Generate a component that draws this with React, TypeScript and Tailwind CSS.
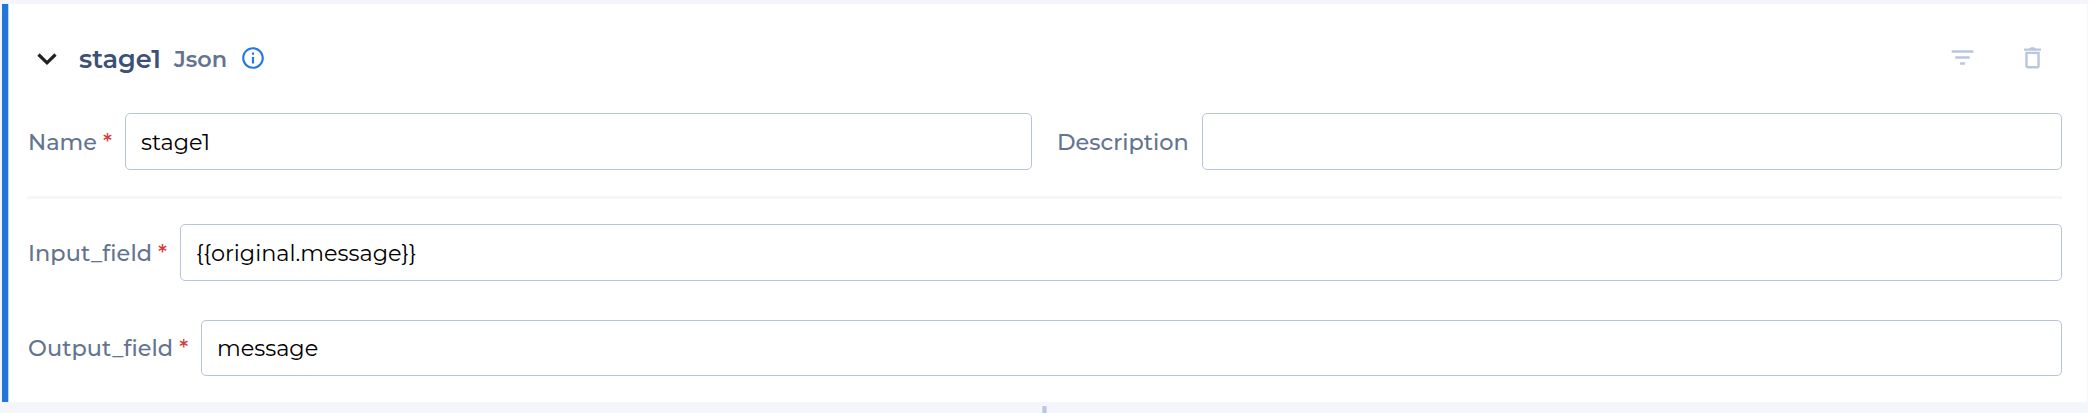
import type { ReactNode } from "react";

function Label({ children, star, className }: { children: ReactNode; star?: boolean; className: string }) {
  return (
    <span className={"flex h-full shrink-0 items-center text-[22.4px] font-medium whitespace-pre text-[#64748f] " + className}>
      <span>{children}</span>
      {star && <span className="ml-[6px] text-[#d03a3a]">*</span>}
    </span>
  );
}

function Field({ value, className, label }: { value: string; className: string; label: string }) {
  return (
    <input
      aria-label={label}
      defaultValue={value}
      className={"shrink-0 rounded-[5px] border border-[#b8c3dc] bg-white px-[15px] text-[22.4px] text-black outline-none " + className}
    />
  );
}

export default function App() {
  return (
    <main className="flex h-[413px] w-[2088px] flex-col overflow-hidden bg-[#f5f6fb] pt-1 pl-[2px] font-['Montserrat','Inter',sans-serif]">
      <section className="flex h-[398px] w-[2085px] shrink-0 flex-col border-l-[6px] border-[#2176db] bg-white pr-[25px]">
        <div className="flex min-h-0 flex-1 flex-col border-l border-[#bdd5f3] pl-[18px]">
          <header className="flex h-[109px] shrink-0 items-center">
            <svg className="ml-[9px] h-[14px] w-[22px]" viewBox="0 0 22 14" fill="none" stroke="#222" strokeWidth="3.2">
              <path d="M2.500 2.500 11 10.800 19.500 2.500" />
            </svg>
            <h2 className="mt-px ml-[21px] w-[95px] text-[25.6px] font-semibold whitespace-nowrap text-[#3c5078]">stage1</h2>
            <span className="mt-[3px] w-[63px] text-[22.4px] font-semibold whitespace-nowrap text-[#64748f]">Json</span>
            <svg className="mb-[2px] ml-[3px] h-[26px] w-[26px]" viewBox="0 0 24 24" fill="#2176e8">
              <path d="M11 7h2v2h-2zm0 4h2v6h-2zm1-9C6.480 2 2 6.480 2 12s4.480 10 10 10 10-4.480 10-10S17.520 2 12 2zm0 18c-4.410 0-8-3.590-8-8s3.590-8 8-8 8 3.590 8 8-3.590 8-8 8z" />
            </svg>
            <div className="mr-[15px] mb-[2px] ml-auto flex items-center gap-[41px] text-[#b9c6de]">
              <svg className="h-[29px] w-[29px]" viewBox="0 0 24 24" fill="currentColor">
                <path d="M10 18h4v-2h-4v2zM3 6v2h18V6H3zm3 7h12v-2H6v2z" />
              </svg>
              <svg className="h-[29px] w-[29px]" viewBox="0 0 24 24" fill="currentColor">
                <path d="M5 4.500h4.300c.5-1.300 4.900-1.300 5.400 0H19v2H5zM6 7.200h12V19c0 1.100-.9 2-2 2H8c-1.100 0-2-.9-2-2zM8 9v10h8V9z" fillRule="evenodd" />
              </svg>
            </div>
          </header>
          <div className="flex h-[83px] shrink-0 items-start">
            <div className="flex h-[57px] w-[98px] shrink-0"><Label star className="pt-[2px] pl-px">Name</Label></div>
            <Field label="Name" value="stage1" className="h-[57px] w-[907px] pt-px" />
            <div className="ml-[25px] flex h-[57px] w-[145px] shrink-0"><Label className="pt-[2px]">Description</Label></div>
            <Field label="Description" value="" className="h-[57px] w-[860px]" />
          </div>
          <hr className="h-[3px] shrink-0 border-0 bg-[#f5f6fb]" />
          <div className="mt-[25px] flex h-[57px] shrink-0">
            <div className="w-[153px] shrink-0"><Label star className="pt-[2px] pl-px tracking-[0.08px]">Input_field</Label></div>
            <Field label="Input_field" value="{{original.message}}" className="h-[57px] w-[1882px] pt-px" />
          </div>
          <div className="mt-[39px] flex h-[56px] shrink-0">
            <div className="w-[174px] shrink-0"><Label star className="pt-px pl-px tracking-[0.08px]">Output_field</Label></div>
            <Field label="Output_field" value="message" className="h-[56px] w-[1861px]" />
          </div>
        </div>
      </section>
      <div className="mt-1 ml-[1040px] h-[7px] w-[5px] shrink-0 border-x border-[#d2dbeb] bg-[#b9c8e0]" />
    </main>
  );
}
